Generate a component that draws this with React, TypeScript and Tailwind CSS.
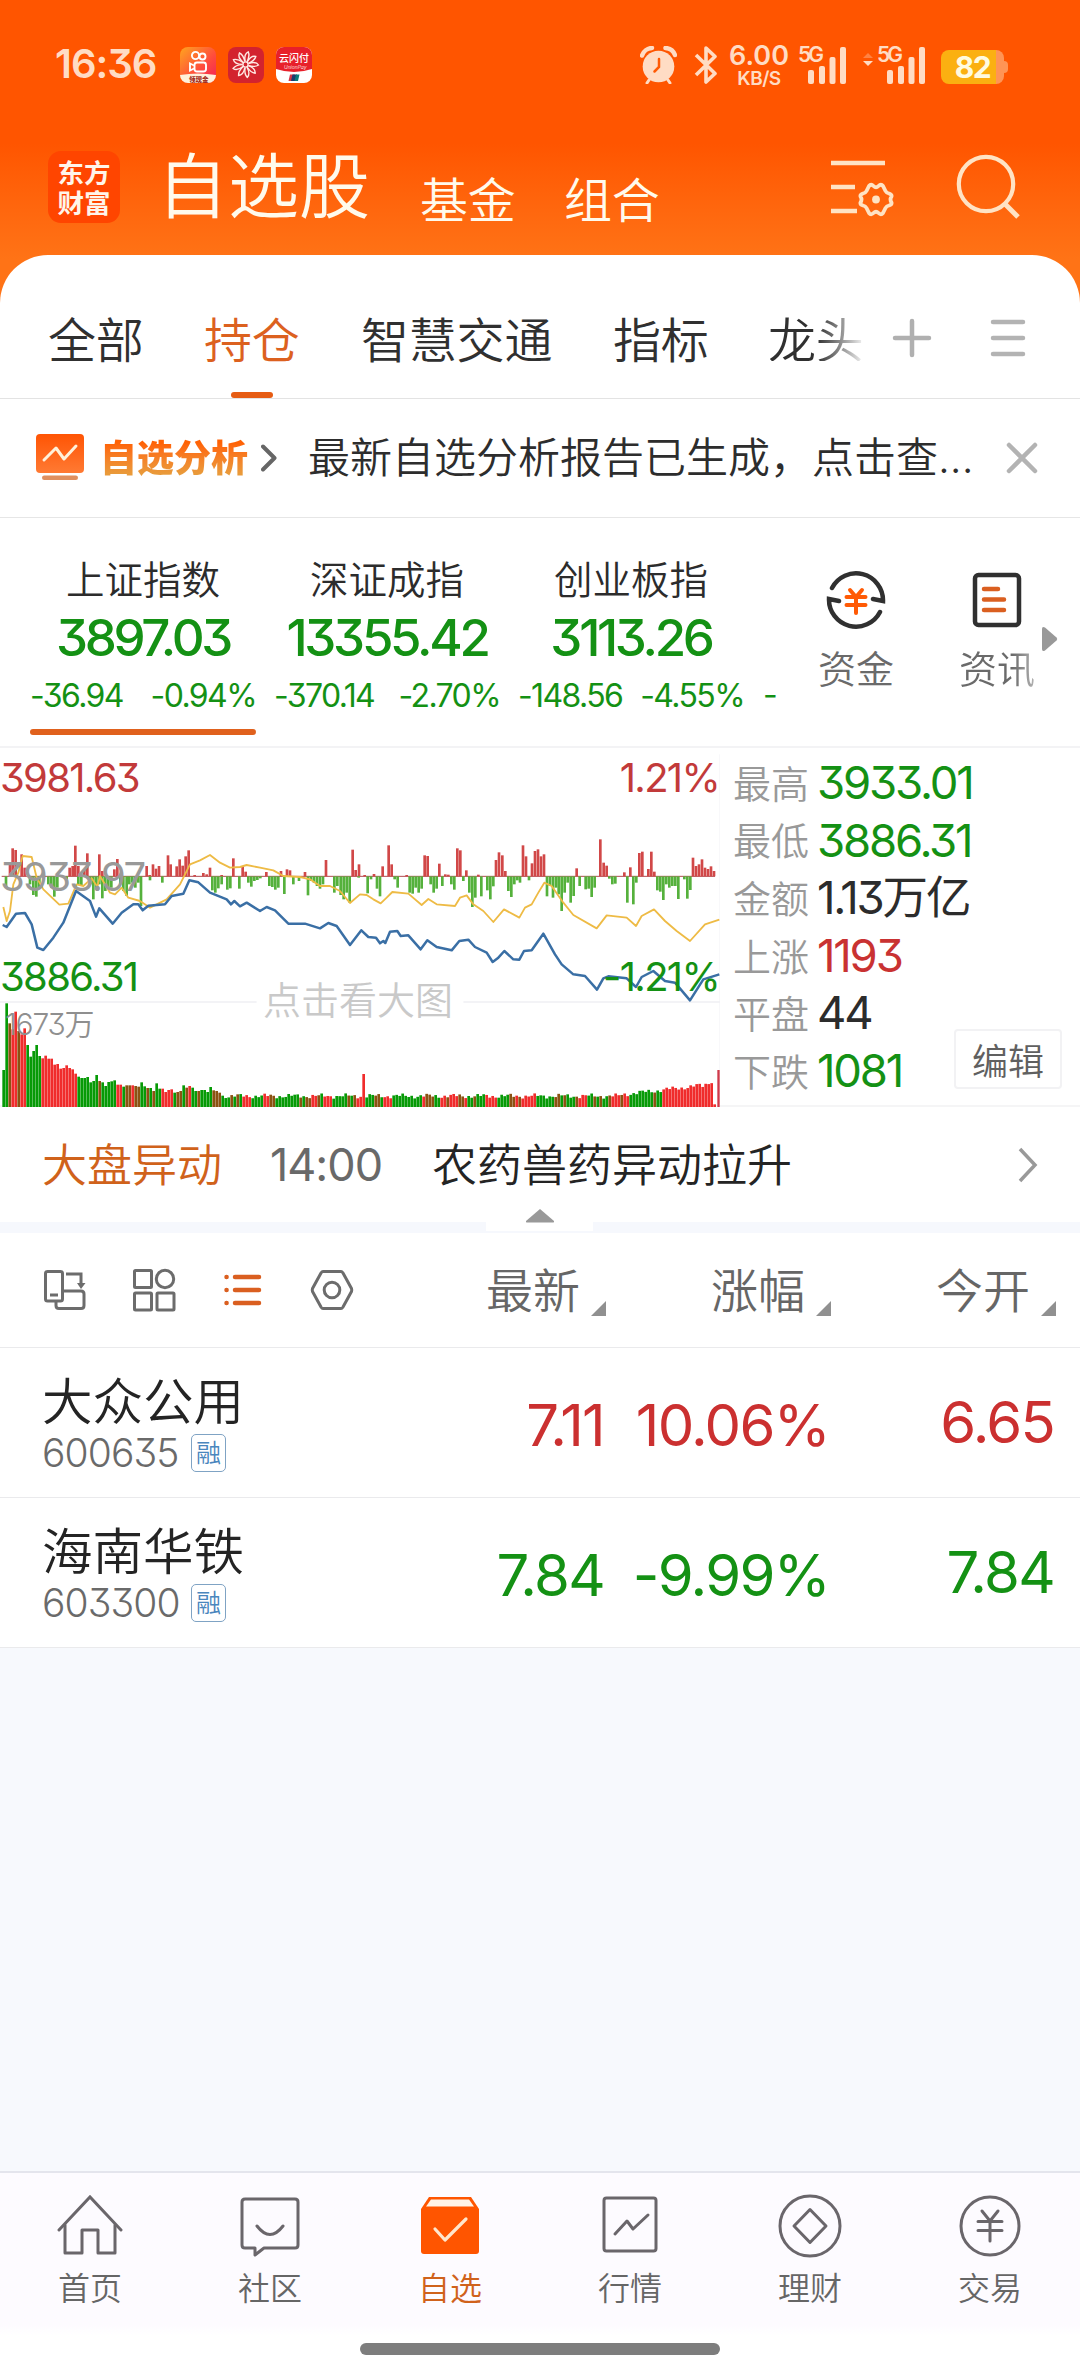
import React from 'react';

const FACE = "font-['Inter','Noto_Sans_CJK_SC',sans-serif] [font-feature-settings:'cv09'] whitespace-nowrap leading-none";
const NUM = `${FACE} font-normal`;

/* ---------- chart data (x, y in chart units, 3 units per pixel) ---------- */

const ZERO = 406;

const UP: number[][] = [
  [30, 365], [38, 322], [47, 327], [65, 340], [74, 380], [209, 380], [218, 375], [226, 314], [235, 375], [244, 400],
  [253, 385], [262, 337], [298, 340], [307, 390], [343, 385], [352, 354], [440, 375], [449, 402], [459, 370], [468, 383],
  [477, 375], [504, 343], [512, 370], [530, 376], [539, 355], [548, 374], [557, 346], [566, 328], [584, 402], [610, 396],
  [620, 400], [630, 380], [665, 402], [700, 352], [728, 375], [737, 392], [799, 393], [843, 390], [861, 385], [870, 388],
  [915, 393], [978, 357], [1058, 326], [1067, 387], [1077, 370], [1094, 402], [1122, 399], [1148, 376], [1166, 313],
  [1175, 370], [1220, 402], [1274, 343], [1283, 345], [1318, 368], [1336, 400], [1345, 401], [1372, 322], [1381, 328],
  [1399, 388], [1435, 401], [1488, 357], [1497, 334], [1507, 343], [1516, 390], [1569, 313], [1578, 346], [1596, 367],
  [1605, 330], [1614, 325], [1623, 346], [1632, 340], [1730, 382], [1801, 295], [1811, 365], [1820, 374], [1873, 394],
  [1891, 379], [1918, 336], [1927, 332], [1945, 384], [1954, 332], [1963, 392], [2079, 350], [2088, 375], [2097, 370],
  [2106, 355], [2115, 380], [2124, 384], [2133, 376], [2142, 390],
];

const DOWN: number[][] = [
  [18, 440], [90, 430], [100, 462], [109, 467], [118, 440], [145, 430], [154, 440], [163, 467], [172, 440], [200, 415],
  [235, 430], [244, 435], [271, 430], [280, 475], [289, 440], [298, 430], [307, 472], [316, 450], [325, 440], [334, 440],
  [361, 430], [370, 450], [380, 465], [388, 430], [397, 425], [406, 440], [415, 425], [423, 495], [450, 418], [487, 425],
  [637, 448], [646, 455], [655, 442], [665, 430], [682, 446], [691, 442], [718, 443], [745, 425], [754, 437], [763, 420],
  [772, 417], [781, 412], [808, 435], [817, 438], [826, 446], [835, 440], [853, 459], [880, 430], [897, 420], [924, 463],
  [933, 420], [942, 425], [951, 435], [960, 443], [969, 430], [1003, 455], [1012, 435], [1022, 462], [1031, 475],
  [1040, 455], [1049, 485], [1076, 410], [1103, 457], [1113, 415], [1131, 443], [1140, 466], [1184, 415], [1193, 440],
  [1229, 455], [1238, 458], [1247, 440], [1256, 455], [1265, 443], [1292, 430], [1301, 455], [1310, 443], [1327, 435],
  [1354, 430], [1363, 446], [1390, 420], [1408, 455], [1417, 498], [1426, 470], [1444, 466], [1462, 448], [1471, 475],
  [1480, 436], [1525, 450], [1534, 468], [1543, 430], [1552, 418], [1560, 425], [1587, 418], [1641, 466], [1650, 435],
  [1659, 470], [1668, 440], [1676, 460], [1685, 510], [1694, 455], [1703, 425], [1712, 485], [1721, 465], [1739, 435],
  [1757, 445], [1766, 443], [1775, 468], [1784, 440], [1828, 413], [1837, 430], [1846, 428], [1882, 485], [1900, 490],
  [1909, 425], [1972, 448], [1981, 452], [1990, 477], [1999, 430], [2008, 440], [2017, 435], [2026, 435], [2035, 474],
  [2053, 415], [2062, 473], [2071, 447],
];

const AVERAGE =
  '10,498 20,540 30,510 40,430 55,395 68,345 95,348 110,410 130,445 178,491 205,488 230,430 250,435 275,412 292,437 300,405 330,455 345,460 365,440 385,470 420,480 450,500 470,490 500,475 540,430 570,370 600,358 630,342 660,365 690,380 720,378 740,372 780,380 820,388 850,405 900,408 930,415 960,435 990,435 1020,450 1050,486 1080,460 1100,462 1120,475 1142,487 1160,470 1177,453 1225,458 1265,492 1285,474 1310,490 1365,495 1380,470 1400,463 1420,490 1450,510 1480,543 1512,505 1558,530 1575,500 1595,490 1615,455 1633,425 1655,435 1690,485 1720,522 1790,562 1820,523 1880,530 1908,555 1925,525 1962,505 1995,540 2030,570 2070,600 2115,550 2158,536';

const PRICE =
  '8,552 20,558 48,518 75,516 95,550 112,620 130,627 160,590 190,545 228,450 270,480 288,527 298,502 338,548 365,515 400,490 415,490 428,508 445,494 495,490 515,465 550,458 568,418 595,424 630,455 680,475 693,490 703,480 720,496 740,485 780,510 800,498 825,508 865,548 915,548 960,562 985,546 1010,555 1050,612 1084,568 1105,588 1128,590 1140,607 1150,600 1156,606 1170,572 1192,570 1202,585 1225,583 1262,625 1282,598 1310,618 1355,628 1378,600 1405,596 1425,618 1460,635 1478,663 1495,650 1513,630 1540,655 1558,656 1572,630 1595,628 1630,578 1665,640 1685,670 1720,700 1755,705 1791,746 1810,712 1825,706 1880,712 1908,738 1925,708 1960,690 1995,720 2025,725 2070,778 2110,715 2158,700';

const VOLUME_TOPS = [
  987, 787, 847, 865, 812, 870, 880, 862, 912, 947, 930, 912, 945, 952, 944, 953, 953, 971, 969, 983, 981, 973, 981, 985,
  998, 1007, 1011, 1011, 1008, 1024, 1020, 1002, 1020, 1024, 1035, 1023, 1021, 1018, 1031, 1031, 1037, 1033, 1033, 1033,
  1035, 1037, 1024, 1036, 1041, 1041, 1050, 1027, 1043, 1043, 1053, 1047, 1045, 1055, 1053, 1050, 1033, 1040, 1035, 1040,
  1050, 1050, 1047, 1047, 1053, 1038, 1048, 1050, 1055,
];

const VOLUME_COLORS =
  'ggbrrbrrggggg' + 'rrrrrrrrrrrr' + 'gggggggbggggg' + 'rrgbbrbbggbgbgg' + 'rrrrgbbgbrggbgggg' + 'bbbgggbgbgrrrggggrrbbggggggggbgbbrrbgrrrgggggbgbrrr' +
  'gggbbgrrrggggggggggrbbbggrrbrrrbbrggbgggrrrrggggbbrbrrrrrggggggbbgbgggbrrrggbgbggbrrrbrrggggggggbggrrrrrrrr';

const PAINT: Record<string, string> = { g: '#069a06', r: '#f02c2c', b: '#8b5212' };

function volumeTop(i: number): number {
  if (i < VOLUME_TOPS.length) return VOLUME_TOPS[i];
  if (i === 120) return 999;
  if (i === 237) return 1090;
  const wobble = Math.sin(i * 2.3) * 4 + Math.sin(i * 0.7) * 4;
  if (i > 232) return 1040 - (i - 232) * 5 + wobble;
  if (i > 205) return 1062 - (i - 205) * 1.05 + wobble;
  return 1065 + wobble;
}

function Chart() {
  return (
    <svg viewBox="0 21 2160 1077" className="block h-[359px] w-[720px]" fill="none">
      <path d="M0 783H770M1390 783H2160" stroke="#f0f0f4" strokeWidth="4" />
      <path d="M2161 40V1098" stroke="#f1f1f6" strokeWidth="5" />
      {Array.from({ length: 238 }, (_, i) => (
        <rect key={i} x={7 + i * 9} y={volumeTop(i)} width="8" height={1098 - volumeTop(i)} fill={PAINT[VOLUME_COLORS[i] || 'r']} />
      ))}
      <rect x="2152" y="987" width="7" height="111" fill="#cf3a4a" />
      <path d={`M5 ${ZERO}H2145`} stroke="#b04a50" strokeWidth="3" />
      {UP.map(([x, y]) => (
        <rect key={x} x={x - 4} y={y} width="8" height={ZERO - y} fill="#d14848" />
      ))}
      {DOWN.map(([x, y]) => (
        <rect key={x} x={x - 4} y={ZERO} width="8" height={y - ZERO} fill="#55b13c" />
      ))}
      <polyline points={AVERAGE} stroke="#eebb45" strokeWidth="5.500" strokeLinejoin="round" />
      <polyline points={PRICE} stroke="#3a6fa5" strokeWidth="7.500" strokeLinejoin="round" />
    </svg>
  );
}

/* ---------- status bar ---------- */

function Signal() {
  return (
    <svg viewBox="0 0 38 37" className="absolute left-[10px] top-[1px] h-[37px] w-[38px]" fill="#ffdcc4">
      <rect x="0" y="23" width="6" height="14" rx="2" />
      <rect x="11" y="19" width="6" height="18" rx="2" />
      <rect x="21.500" y="10" width="6" height="27" rx="2" />
      <rect x="32" y="0" width="6" height="37" rx="2" />
    </svg>
  );
}

function StatusBar() {
  return (
    <div className="flex h-[130px] items-center pl-[55px] text-[#ffdcc4]">
      <span className={`${FACE} mt-[-2px] w-[125px] text-[40px] font-semibold tracking-[-1px]`}>16:36</span>
      <svg viewBox="0 0 36 36" className="h-9 w-9">
        <defs>
          <linearGradient id="ks" x1="0" y1="0" x2="1" y2="1">
            <stop offset="0" stopColor="#ffa51f" />
            <stop offset="0.6" stopColor="#ff4a3d" />
            <stop offset="1" stopColor="#f0205a" />
          </linearGradient>
        </defs>
        <rect width="36" height="36" rx="8" fill="url(#ks)" />
        <path d="M0 28Q18 25 36 28A8 8 0 0 1 28 36H8A8 8 0 0 1 0 28Z" fill="#fff1da" />
        <g fill="none" stroke="#fff" strokeWidth="1.900">
          <circle cx="15.500" cy="8.500" r="3.600" />
          <circle cx="22.500" cy="9.500" r="3" />
          <rect x="14.500" y="15.500" width="11.500" height="9" rx="2.500" />
          <path d="M14 18.500L10 16.500V23.500L14 21.500" />
        </g>
        <text x="9" y="34.500" fontSize="6.500" fontWeight="900" fill="#a02c1c" fontFamily="Noto Sans CJK SC">领现金</text>
      </svg>
      <svg viewBox="0 0 36 36" className="ml-3 h-9 w-9">
        <rect width="36" height="36" rx="8" fill="#d3232e" />
        <g fill="none" stroke="#ffe9e4" strokeWidth="1.400">
          {[0, 40, 80, 120, 160, 200, 240, 280, 320].map((a) => (
            <path key={a} transform={`rotate(${a + 10} 17.500 17.500)`} d="M16.500 14.500Q14 7 18 4.500Q20.500 8 18.500 14.500" />
          ))}
          <circle cx="17.500" cy="17.500" r="2.600" />
        </g>
      </svg>
      <svg viewBox="0 0 36 36" className="ml-3 h-9 w-9">
        <rect width="36" height="36" rx="8" fill="#fff" />
        <path d="M8 0H28A8 8 0 0 1 36 8V22Q18 28 0 22V8A8 8 0 0 1 8 0Z" fill="#e8202a" />
        <text x="3" y="15" fontSize="10" fontWeight="500" fill="#fff" fontFamily="Noto Sans CJK SC">云闪付</text>
        <text x="8" y="21.500" fontSize="5" fontStyle="italic" fill="#fff" fontFamily="Inter">UnionPay</text>
        <path d="M14 27.500H19L17.500 34H12.500Z" fill="#d43545" />
        <path d="M16.500 27.500H21L19.500 34H15Z" fill="#1d3c6e" />
        <path d="M20 27.500H23.500L22 34H18.500Z" fill="#0c7a78" />
      </svg>

      <svg viewBox="0 0 37 38" className="ml-[328px] h-[38px] w-[37px]">
        <circle cx="18.500" cy="20.500" r="15.800" fill="#ffdcc4" />
        <path d="M2 9.500A11 11 0 0 1 12 2" fill="none" stroke="#ffdcc4" strokeWidth="4.500" strokeLinecap="round" />
        <path d="M25.500 2A11 11 0 0 1 35 9" fill="none" stroke="#ffdcc4" strokeWidth="4.500" strokeLinecap="round" />
        <path d="M9 34L7 37M28 34L30 37" stroke="#ffdcc4" strokeWidth="3" strokeLinecap="round" />
        <path d="M19 13V21L14.500 25.500" fill="none" stroke="#ff5a05" strokeWidth="2.500" strokeLinecap="round" />
      </svg>
      <svg viewBox="0 0 24 38" className="ml-[17px] h-[38px] w-[24px]" fill="none" stroke="#ffdcc4" strokeWidth="3.600" strokeLinejoin="round">
        <path d="M2 9L21 27.500L12 36V2L21 10.500L2 29" />
      </svg>
      <div className="ml-[11px] flex w-[60px] flex-col items-center">
        <span className={`${FACE} text-[27px] font-semibold leading-[21px] tracking-[0px]`}>6.00</span>
        <span className={`${FACE} text-[19px] font-semibold leading-[17px] tracking-[-0.500px]`}>KB/S</span>
      </div>
      <div className="relative ml-[9px] h-[38px] w-[49px]">
        <span className={`${FACE} absolute left-0 top-[-2px] text-[21px] font-semibold tracking-[-3px]`}>5G</span>
        <Signal />
      </div>
      <svg viewBox="0 0 10 16" className="mb-[10px] ml-[16px] h-4 w-[10px]">
        <path d="M0 6L5 1L10 6Z" fill="#ff8243" />
        <path d="M0 9L5 14L10 9Z" fill="#ffdcc4" />
      </svg>
      <div className="relative ml-[4px] h-[38px] w-[49px]">
        <span className={`${FACE} absolute left-0 top-[-2px] text-[21px] font-semibold tracking-[-3px]`}>5G</span>
        <Signal />
      </div>
      <div className="ml-[15px] mt-[3px] flex items-center">
        <div className="flex h-[34px] w-[63px] items-center justify-center overflow-hidden rounded-[8px] bg-linear-to-r from-[#fbb011] from-88% to-[#ff9455] to-88%">
          <span className={`${FACE} text-[30px] font-bold tracking-[-1.500px] text-[#fffbe0]`}>82</span>
        </div>
        <div className="h-3 w-1 rounded-r-sm bg-[#ff9455]" />
      </div>
    </div>
  );
}

function Header() {
  return (
    <div className="flex h-[125px] items-start pl-12 text-[#fffaec]">
      <div className="mt-[21px] flex h-[72px] w-[72px] flex-col items-center justify-center rounded-[13px] bg-[#ff4500] text-[26.500px] font-bold leading-[30px] text-[#fff5ea]">
        <span>东方</span>
        <span>财富</span>
      </div>
      <span className="ml-[37px] mt-[16px] w-[226px] whitespace-nowrap text-[71px] leading-[70px]">自选股</span>
      <span className="ml-[37px] mt-[43px] w-[144px] whitespace-nowrap text-[48px] leading-[48px] tracking-[-0.300px]">基金</span>
      <span className="mt-[43px] w-[266px] whitespace-nowrap text-[48px] leading-[48px] tracking-[-0.300px]">组合</span>
      <svg viewBox="0 0 64 60" className="mt-[28px] h-[60px] w-[64px]" fill="none" stroke="#ffe3c4" strokeWidth="4.500">
        <path d="M1 5H55M1 29H25M1 53H27" />
        <path
          d="M39 28Q41 25.500 43.500 28Q46 30.500 48.500 28Q51 25.500 53 28L55.500 33Q56.500 35 59 35.500Q62 36.500 61.500 38.500Q59.500 41.500 61.500 44.500Q62 46.500 59 47.500Q56.500 48 55.500 50L53 55Q51 57.500 48.500 55Q46 52.500 43.500 55Q41 57.500 39 55L36.500 50Q35.500 48 33 47.500Q30 46.500 30.500 44.500Q32.500 41.500 30.500 38.500Q30 36.500 33 35.500Q35.500 35 36.500 33Z"
          strokeWidth="3.800"
          strokeLinejoin="round"
        />
        <circle cx="46" cy="41.500" r="3.900" fill="#ffe3c4" stroke="none" />
      </svg>
      <svg viewBox="0 0 64 66" className="ml-[62px] mt-[24px] h-[66px] w-[64px]" fill="none" stroke="#ffe3c4" strokeWidth="4.200">
        <circle cx="30" cy="30" r="27.200" />
        <path d="M48 49L62 63" strokeWidth="5" />
      </svg>
    </div>
  );
}

function Tabs() {
  return (
    <div className="flex h-[144px] items-start border-b border-[#e3e3e3] pl-12 text-[48px] leading-[48px] tracking-[-0.200px] text-[#303030]">
      <span className="mt-[58px] w-[156px]">全部</span>
      <div className="relative mt-[58px] w-[157px] text-[#dc611f]">
        持仓
        <div className="absolute left-[27px] top-[79px] h-[6px] w-[42px] rounded-full bg-[#e65c13]" />
      </div>
      <span className="mt-[58px] w-[252px] whitespace-nowrap">智慧交通</span>
      <span className="mt-[58px] w-[155px]">指标</span>
      <span className="mt-[58px] w-[100px] bg-linear-to-r from-[#303030] from-48% to-white to-98% bg-clip-text text-transparent">龙头</span>
      <svg viewBox="0 0 40 40" className="ml-[24px] mt-[63px] h-10 w-10" stroke="#b0b0b0" strokeWidth="4.500" strokeLinecap="round">
        <path d="M3 20H37M20 3V37" />
      </svg>
      <svg viewBox="0 0 38 40" className="ml-[57px] mt-[63px] h-10 w-[38px]" stroke="#b3b3b3" strokeWidth="4.500" strokeLinecap="round">
        <path d="M4 4H34M4 20H34M4 36H34" />
      </svg>
    </div>
  );
}

function Banner() {
  return (
    <div className="flex h-[119px] items-center border-b border-[#e6e6e6] pl-9">
      <svg viewBox="0 0 48 48" className="h-12 w-12">
        <defs>
          <linearGradient id="scr" x1="0" y1="0" x2="0" y2="1">
            <stop offset="0" stopColor="#ff5404" />
            <stop offset="1" stopColor="#ff7a33" />
          </linearGradient>
        </defs>
        <rect x="0" y="0" width="48" height="39" rx="4" fill="url(#scr)" />
        <path d="M8 26L20 14L28 25L40 12" fill="none" stroke="#fff1da" strokeWidth="3" strokeLinecap="round" strokeLinejoin="round" />
        <rect x="6" y="41.500" width="36" height="4.500" rx="2.200" fill="#e0905f" />
      </svg>
      <span className="ml-[16px] mt-[-5px] bg-linear-to-b from-[#ff6204] from-20% to-[#e99a3a] to-90% bg-clip-text text-[37px] font-black leading-[44px] text-transparent">自选分析</span>
      <svg viewBox="0 0 16 28" className="ml-[13px] h-7 w-4" fill="none" stroke="#666" strokeWidth="4" strokeLinecap="round" strokeLinejoin="round">
        <path d="M2 2.500L13.500 14L2 25.500" />
      </svg>
      <span className="ml-[31px] mt-[-3px] w-[698px] whitespace-nowrap text-[42px] leading-[44px] text-[#2d2d2d]">最新自选分析报告已生成，点击查<span className="font-['Inter']">...</span></span>
      <svg viewBox="0 0 32 32" className="h-8 w-8" stroke="#b3b3b3" strokeWidth="4.500" strokeLinecap="round">
        <path d="M3 3L29 29M29 3L3 29" />
      </svg>
    </div>
  );
}

const INDEXES = [
  { name: '上证指数', value: '3897.03', diff: '-36.94', pct: '-0.94%', active: true },
  { name: '深证成指', value: '13355.42', diff: '-370.14', pct: '-2.70%', active: false },
  { name: '创业板指', value: '3113.26', diff: '-148.56', pct: '-4.55%', active: false },
];

function Indexes() {
  return (
    <div className="flex h-[230px] border-b-2 border-[#f3f3f5] pl-[21px]">
      <div className="flex w-[756px] overflow-hidden">
        {INDEXES.map((it) => (
          <div key={it.name} className="flex w-[244px] shrink-0 flex-col items-center pt-[39px] text-[#149114]">
            <span className="text-[38.500px] leading-[40px] text-[#2c2c2c]">{it.name}</span>
            <span className={`${FACE} mt-[15px] text-[51px] font-medium leading-[50px] tracking-[-3.300px]`}>{it.value}</span>
            <div className={`${NUM} mt-[17px] flex w-[226px] justify-between text-[32px] leading-[32px] tracking-[-1.600px]`}>
              <span>{it.diff}</span>
              <span>{it.pct}</span>
            </div>
            {it.active && <div className="mt-[17px] h-[6px] w-[226px] rounded-full bg-[#e0611d]" />}
          </div>
        ))}
        <span className={`${NUM} ml-[10px] mt-[161px] text-[32px] leading-[32px] text-[#149114]`}>-</span>
      </div>
      <div className="flex w-[158px] flex-col items-center pt-[52px]">
        <svg viewBox="0 0 60 60" className="h-[60px] w-[60px]" fill="none" stroke="#303030" strokeWidth="4.500" strokeLinecap="round">
          <path d="M6 18A27 27 0 0 1 57 31L47 29" />
          <path d="M54 42A27 27 0 0 1 3 29L13 31" />
          <g stroke="#ff5a05" strokeWidth="4">
            <path d="M24 20L30 27L36 20M20.500 27H39.500M20.500 35H39.500M30 27V43" />
          </g>
        </svg>
        <span className="mt-[17px] text-[38px] leading-[40px] text-[#6a6a6a]">资金</span>
      </div>
      <div className="ml-[22px] flex w-[80px] flex-col items-center pt-[54px]">
        <svg viewBox="0 0 50 56" className="h-[56px] w-[50px]" fill="none">
          <rect x="3" y="3" width="44" height="50" rx="3.500" stroke="#303030" strokeWidth="4.500" />
          <path d="M12 17H26M12 27.500H32M12 38H32" stroke="#da5f20" strokeWidth="4.500" strokeLinecap="round" />
        </svg>
        <span className="mt-[19px] bg-linear-to-r from-[#6a6a6a] from-70% to-[#b5b5b5] bg-clip-text text-[38px] leading-[40px] text-transparent">资讯</span>
      </div>
      <svg viewBox="0 0 16 26" className="ml-[5px] mt-[108px] h-[26px] w-4" fill="#999">
        <path d="M0 3Q0 0 3 1.500L14.500 11.500Q16 13 14.500 14.500L3 24.500Q0 26 0 23Z" />
      </svg>
    </div>
  );
}

const STATS = [
  ['最高', '3933.01', 'text-[#149114]'],
  ['最低', '3886.31', 'text-[#149114]'],
  ['金额', '1.13万亿', 'text-[#2c2c2c]'],
  ['上涨', '1193', 'text-[#c93232]'],
  ['平盘', '44', 'text-[#2c2c2c]'],
  ['下跌', '1081', 'text-[#149114]'],
];

function MarketPanel() {
  return (
    <div className="relative flex h-[359px] border-b-2 border-[#f5f5f6]">
      <div className="relative w-[721px] shrink-0">
        <span className="absolute left-[263px] top-[230px] text-[38px] leading-[40px] text-[#c9c9c9]">点击看大图</span>
        <div className="relative">
          <Chart />
        </div>
        <span className={`${NUM} absolute left-0 top-[10px] text-[40px] tracking-[-1.700px] text-[#c23a3a]`}>3981.63</span>
        <span className={`${NUM} absolute left-0 top-[109px] text-[40px] tracking-[-1.700px] text-[#999]`}>3933.97</span>
        <span className={`${NUM} absolute left-0 top-[209px] text-[40px] tracking-[-1.700px] text-[#149114]`}>3886.31</span>
        <span className={`${NUM} absolute right-[2px] top-[10px] text-[40px] tracking-[-1.700px] text-[#c23a3a]`}>1.21%</span>
        <span className={`${NUM} absolute right-[2px] top-[209px] text-[40px] tracking-[-1.700px] text-[#149114]`}>-1.21%</span>
        <span className={`${FACE} absolute left-[5px] top-[261px] text-[30px] font-[350] tracking-[-1.200px] text-[#8f8f8f]`}>1673万</span>
      </div>
      <div className="flex flex-col pl-[12px] pt-[7px]">
        {STATS.map(([label, value, tone]) => (
          <div key={label} className="flex h-[57.600px] items-center">
            <span className="mt-[-4px] w-[84px] text-[38px] leading-[40px] text-[#999]">{label}</span>
            <span className={`${FACE} mt-[-2px] text-[45.500px] font-[370] tracking-[-2.200px] ${tone}`}>{value}</span>
          </div>
        ))}
      </div>
      <div className="absolute left-[954px] top-[281px] flex h-[60px] w-[108px] items-center justify-center rounded-sm border-2 border-[#f2f2f4] bg-white text-[36px] leading-[36px] text-[#606060]">编辑</div>
    </div>
  );
}

function NewsRow() {
  return (
    <div className="relative flex h-[126px] items-center border-b-[11px] border-[#f6f8fd] pl-[42px] text-[45px] leading-[46px]">
      <span className="mt-[-3px] w-[228px] text-[#d0621b]">大盘异动</span>
      <span className={`${NUM} w-[162px] text-[45px] tracking-[-1px] text-[#696969]`}>14:00</span>
      <span className="mt-[-3px] w-[586px] text-[#242424]">农药兽药异动拉升</span>
      <svg viewBox="0 0 20 36" className="h-9 w-5" fill="none" stroke="#999" strokeWidth="3.500">
        <path d="M2 2L17 18L2 34" />
      </svg>
      <div className="absolute left-[486px] top-[92px] flex h-[32px] w-[107px] justify-center bg-white pt-[10px]">
        <svg viewBox="0 0 30 14" className="h-[14px] w-[30px]" fill="#999">
          <path d="M15 0L29 12Q29.500 13.500 28 13.500H2Q0.500 13.500 1 12Z" />
        </svg>
      </div>
    </div>
  );
}

function Column({ label, width }: { label: string; width: string }) {
  return (
    <div className={`flex items-end justify-end ${width}`}>
      <span className="mb-[4px] text-[47px] leading-[48px]">{label}</span>
      <svg viewBox="0 0 15 15" className="ml-[11px] h-[15px] w-[15px]" fill="#909090">
        <path d="M15 0V15H0Z" />
      </svg>
    </div>
  );
}

function Toolbar() {
  return (
    <div className="flex h-[115px] items-center border-b border-[#eaeaec] pl-[43px] text-[#666]">
      <svg viewBox="0 0 44 42" className="h-[42px] w-11" fill="none" stroke="#6c6c6c" strokeWidth="3">
        <rect x="2.500" y="2.500" width="17" height="29.500" rx="2" />
        <path d="M7 26H15M23 5H38V15M20 22H38Q41 22 41 25V36.500Q41 39.500 38 39.500H16Q13 39.500 13 36.500V33" />
        <path d="M34 14H42.500L38 20Z" fill="#6c6c6c" stroke="none" />
      </svg>
      <svg viewBox="0 0 44 44" className="ml-[45px] h-11 w-11" fill="none" stroke="#6c6c6c" strokeWidth="3">
        <rect x="2.500" y="2.500" width="17" height="17" rx="1" />
        <circle cx="33" cy="11" r="8.700" />
        <rect x="2.500" y="25" width="17" height="17" rx="1" />
        <rect x="25" y="25" width="17" height="17" rx="1" />
      </svg>
      <svg viewBox="0 0 40 34" className="ml-[47px] h-[34px] w-10" fill="none" stroke="#da5f20" strokeWidth="4.500" strokeLinecap="round">
        <path d="M12 4H36M12 17H36M12 30H36M3.500 4H3.600M3.500 17H3.600M3.500 30H3.600" />
      </svg>
      <svg viewBox="0 0 44 42" className="ml-[47px] h-[42px] w-11" fill="none" stroke="#6c6c6c" strokeWidth="3" strokeLinejoin="round">
        <path d="M13 2.500H31Q32 2.500 33 4L41.500 19.500Q42 21 41.500 22.500L33 38Q32 39.500 31 39.500H13Q12 39.500 11 38L2.500 22.500Q2 21 2.500 19.500L11 4Q12 2.500 13 2.500Z" />
        <circle cx="22" cy="21" r="7.800" />
      </svg>
      <Column label="最新" width="w-[252px]" />
      <Column label="涨幅" width="w-[225px]" />
      <Column label="今开" width="w-[225px]" />
    </div>
  );
}

const STOCKS = [
  { name: '大众公用', code: '600635', last: '7.11', pct: '10.06%', open: '6.65', tone: 'text-[#cb3030]' },
  { name: '海南华铁', code: '603300', last: '7.84', pct: '-9.99%', open: '7.84', tone: 'text-[#149114]' },
];

function StockRow({ stock }: { stock: (typeof STOCKS)[number] }) {
  const cell = `${FACE} font-[370] text-right text-[58px] tracking-[-1.700px] ${stock.tone}`;
  return (
    <div className="flex h-[150px] items-start border-b border-[#eaeaec] pl-[42px]">
      <div className="w-[302px] pt-[24px]">
        <div className="text-[50.500px] leading-[52px] text-[#242424]">{stock.name}</div>
        <div className="mt-[9px] flex items-center">
          <span className={`${FACE} w-[138px] text-[39px] font-[350] tracking-[-0.900px] text-[#6a6a6a]`}>{stock.code}</span>
          <span className="ml-[11px] flex h-[38px] w-[35px] items-center justify-center rounded-[5px] border-[1.500px] border-[#7fa3c4] pb-[3px] text-[25px] leading-[26px] text-[#4a86bd]">融</span>
        </div>
      </div>
      <span className={`${cell} mt-[48px] w-[260px]`}>{stock.last}</span>
      <span className={`${cell} mt-[48px] w-[225px]`}>{stock.pct}</span>
      <span className={`${cell} mt-[45px] w-[225px]`}>{stock.open}</span>
    </div>
  );
}

const NAV_ICONS: Record<string, React.ReactNode> = {
  首页: (
    <>
      <path d="M2 37L33 4L64 37" strokeLinejoin="miter" />
      <path d="M8 32V60H25V37H41V60H58V32" />
    </>
  ),
  社区: <path d="M8 6H58Q61 6 61 9V52Q61 55 58 55H27L18 62V55H8Q5 55 5 52V9Q5 6 8 6ZM20 33Q33 50 46 33" />,
  自选: (
    <>
      <path d="M12 4H54L62 16V58Q62 61 59 61H7Q4 61 4 58V16Z" fill="#ff5500" stroke="none" />
      <path d="M14 6.500H52L57 13.500H9Z" fill="#fff3e6" stroke="none" />
      <path d="M18 36L28 47L49 26" stroke="#ffe6cc" strokeWidth="3.200" />
    </>
  ),
  行情: (
    <>
      <rect x="7" y="5" width="52" height="53" rx="2.500" />
      <path d="M18 41L30 28L36 36L51 22" />
    </>
  ),
  理财: (
    <>
      <circle cx="33" cy="33" r="30" />
      <path d="M33 16.500L49 33L33 49.500L17 33Z" />
    </>
  ),
  交易: (
    <>
      <circle cx="33" cy="33" r="29" />
      <path d="M25 18L33 28L41 18M21 28.500H45M21 37.500H45M33 28.500V48" />
    </>
  ),
};

function BottomNav() {
  return (
    <div className="h-[205px] border-t-2 border-[#e4e5ed] bg-linear-to-b from-[#fdfbff] from-75% to-white to-80%">
      <div className="flex pt-[20px]">
        {Object.keys(NAV_ICONS).map((label) => (
          <div key={label} className={`flex w-[180px] flex-col items-center ${label === '自选' ? 'text-[#d0621b]' : 'text-[#666]'}`}>
            <svg viewBox="0 0 66 66" className="h-[66px] w-[66px]" fill="none" stroke="#6a666b" strokeWidth="3" strokeLinejoin="round" strokeLinecap="round">
              {NAV_ICONS[label]}
            </svg>
            <span className="mt-[10px] text-[32px] leading-[34px]">{label}</span>
          </div>
        ))}
      </div>
      <div className="mx-auto mt-[40px] h-[12px] w-[360px] rounded-full bg-[#7d7d7d]" />
    </div>
  );
}

export default function App() {
  return (
    <div className="relative flex h-[2376px] w-[1080px] flex-col overflow-hidden bg-[#f7f9fd] font-['Noto_Sans_CJK_SC',sans-serif] font-[350]">
      <div className="bg-linear-to-b from-[#ff5500] from-36% to-[#ff7316] to-65%">
        <StatusBar />
        <Header />
        <div className="rounded-t-[48px] bg-white">
          <Tabs />
        </div>
      </div>
      <div className="bg-white">
        <Banner />
        <Indexes />
        <MarketPanel />
        <NewsRow />
        <Toolbar />
        {STOCKS.map((stock) => (
          <StockRow key={stock.code} stock={stock} />
        ))}
      </div>
      <div className="flex-1" />
      <BottomNav />
    </div>
  );
}
